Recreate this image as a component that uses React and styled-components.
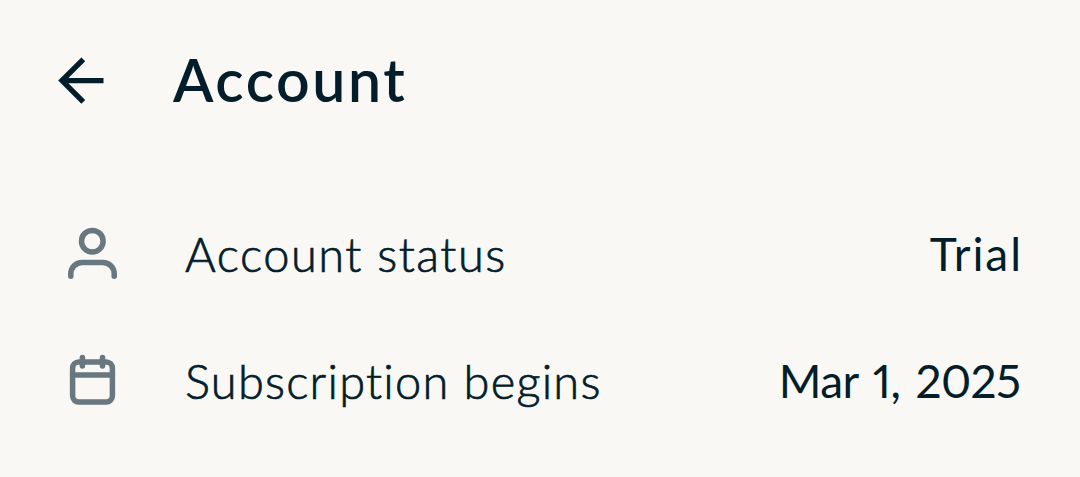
import React from 'react';
import styled, { createGlobalStyle } from 'styled-components';

const UserIcon = () => (
  <svg width='54' height='56' viewBox='0 0 54 56'>
    <circle cx='27.3' cy='15.2' r='10.8' />
    <path d='M5.8 50.2V47.8A11.3 11.3 0 0 1 17.1 36.5H37.9A11.3 11.3 0 0 1 49.2 47.8V50.2' />
  </svg>
);

const CalendarIcon = () => (
  <svg width='54' height='56' viewBox='0 0 54 56'>
    <rect x='7.6' y='9' width='39.8' height='40' rx='6.2' />
    <path d='M7.6 21.9H47.4M17.4 4.6V13M37.5 4.6V13' />
  </svg>
);

const App = () => {
  const data = [
    {
      icon: <UserIcon />,
      label: 'Account status',
      value: 'Trial',
      labelSpacing: '1.52px',
      valueSpacing: '1.9px',
    },
    {
      icon: <CalendarIcon />,
      label: 'Subscription begins',
      value: 'Mar 1, 2025',
      labelSpacing: '1.23px',
      valueSpacing: '-0.6px',
    },
  ];

  return (
    <>
      <GlobalStyle />
      <Wrapper>
        <Header>
          <BackButton aria-label='Back'>
            <svg width='50' height='50' viewBox='0 0 50 50'>
              <path d='M48.5 25.6H8M28.3 4.3L7 25.6L28.3 46.9' />
            </svg>
          </BackButton>
          <Title>Account</Title>
        </Header>
        <List>
          {data.map((item) => {
            const { icon, label, value, labelSpacing, valueSpacing } = item;
            return (
              <Row key={label}>
                <IconBox>{icon}</IconBox>
                <Label $spacing={labelSpacing}>{label}</Label>
                <Value $spacing={valueSpacing}>{value}</Value>
              </Row>
            );
          })}
        </List>
      </Wrapper>
    </>
  );
};

const GlobalStyle = createGlobalStyle`
  * {
    margin: 0;
    padding: 0;
    box-sizing: border-box;
  }
  body {
    background: #f9f8f4;
    color: #031d2b;
    font-family: Lato, sans-serif;
  }
`;

const Wrapper = styled.main`
  height: 477px;
  padding: 44px 59px 0 55px;
  overflow: hidden;
`;

const Header = styled.header`
  display: flex;
  align-items: center;
  height: 72px;
`;

const BackButton = styled.button`
  display: flex;
  width: 50px;
  height: 50px;
  border: none;
  background: none;
  cursor: pointer;
  svg {
    fill: none;
    stroke: #031d2b;
    stroke-width: 5.4;
  }
`;

const Title = styled.h1`
  margin-left: 68px;
  font-size: 59px;
  line-height: 72px;
  font-weight: 600;
  letter-spacing: 2.6px;
`;

const List = styled.ul`
  margin-top: 74px;
  list-style: none;
`;

const Row = styled.li`
  display: flex;
  align-items: center;
  height: 127px;
  margin-left: 10px;
`;

const IconBox = styled.span`
  display: flex;
  width: 54px;
  height: 56px;
  svg {
    fill: none;
    stroke: #687780;
    stroke-width: 5.5;
    stroke-linecap: round;
  }
`;

const Label = styled.span`
  flex: 1;
  margin-left: 66px;
  font-size: 47px;
  line-height: 60px;
  font-weight: 300;
  white-space: nowrap;
  letter-spacing: ${(props) => props.$spacing};
  -webkit-text-stroke: 0.7px #031d2b;
`;

const Value = styled.span`
  /* trailing letter-spacing would pull the text off the right edge */
  margin-right: calc(-1 * ${(props) => props.$spacing});
  font-size: 46px;
  line-height: 60px;
  font-weight: 400;
  font-variant-numeric: proportional-nums;
  white-space: nowrap;
  letter-spacing: ${(props) => props.$spacing};
  word-spacing: 4px;
`;

export default App;
